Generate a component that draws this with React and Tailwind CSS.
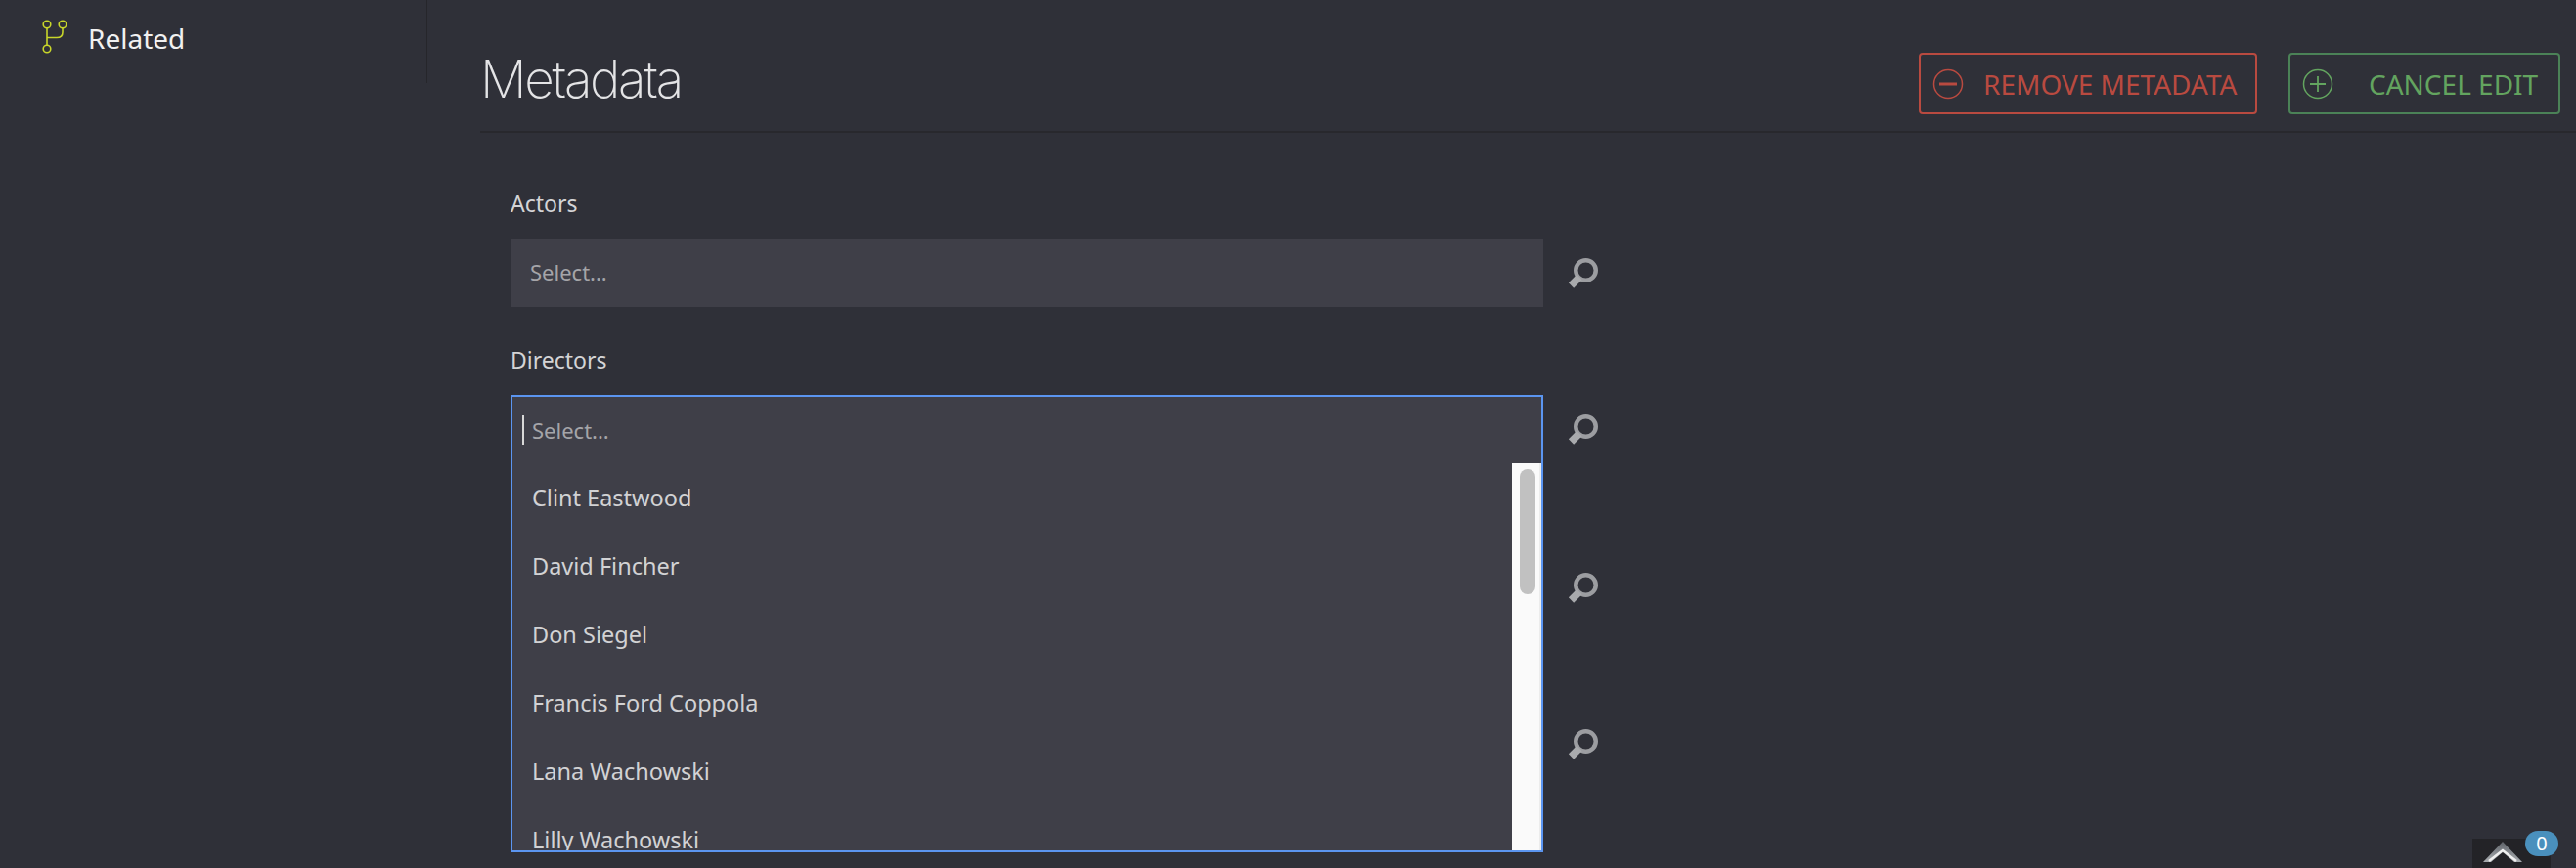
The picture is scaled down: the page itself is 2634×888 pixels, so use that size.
import { useState } from "react";

const SANS = "font-['Noto_Sans',sans-serif]";

const directors = [
    "Clint Eastwood",
    "David Fincher",
    "Don Siegel",
    "Francis Ford Coppola",
    "Lana Wachowski",
    "Lilly Wachowski",
];

function BranchIcon() {
    return (
        <svg width="30" height="38" viewBox="0 0 30 38" fill="none" stroke="#c8d62a" strokeWidth="1.6" className="shrink-0">
            <circle cx="8" cy="7" r="3.800" />
            <circle cx="24" cy="7" r="3.800" />
            <circle cx="8" cy="32" r="3.800" />
            <path d="M8 10.800v17.400M8 20.500h10c3.500 0 6-2 6-5.500v-4.200" />
        </svg>
    );
}

function SearchIcon() {
    return (
        <svg width="34" height="34" viewBox="0 0 34 34" fill="none" className="shrink-0">
            <circle cx="20.500" cy="13.500" r="10.250" stroke="#9c9da1" strokeWidth="4.500" />
            <path d="M14 20.500 5.500 29" stroke="#a9aaad" strokeWidth="7.500" />
        </svg>
    );
}

function ActionButton({ label, tone, icon, gap, width }) {
    const isRed = tone === "red";
    return (
        <button
            className={`flex items-center h-[63px] rounded-[4px] border-2 pl-[12px] ${width} ${isRed ? "border-[#b94a40] text-[#b94a40]" : "border-[#4b8257] text-[#63a45f]"}`}
        >
            <svg width="32" height="32" viewBox="0 0 32 32" fill="none" stroke="currentColor" className="shrink-0">
                <circle cx="16" cy="16" r="14.500" strokeWidth="1.500" />
                {icon === "minus" ? (
                    <path d="M7 16h18" strokeWidth="3" />
                ) : (
                    <path d="M8 16h16M16 8v16" strokeWidth="1.800" />
                )}
            </svg>
            <span className={`text-[28px] leading-none whitespace-nowrap ${gap}`}>{label}</span>
        </button>
    );
}

// covered rows sit behind the open dropdown, only their search icon shows
function SelectField({ label, height, covered }) {
    return (
        <div className={`${height} pt-[32px]`}>
            <div className="text-[23px] leading-[30px] pt-[2px] h-[30px] text-[#d4d4d6] mb-[23px]">{label}</div>
            <div className="flex items-center">
                <div className="w-[1056px] h-[70px] bg-[#3f3f48] flex items-center pl-[20px] pb-[2px] text-[22px] text-[#a5a5a9]">
                    {!covered && "Select..."}
                </div>
                <div className="ml-[23px] mt-[2px]">
                    <SearchIcon />
                </div>
            </div>
        </div>
    );
}

function DirectorsMenu() {
    return (
        <div className="absolute left-[31px] top-[404px] w-[1056px] h-[468px] border-2 border-[#5b95f0] bg-[#3f3f48] flex flex-col">
            <div className="h-[68px] shrink-0 flex items-center pl-[10px] text-[22px] text-[#a5a5a9]">
                <span className="w-[2px] h-[30px] bg-[#d8d8d8] mr-[8px]" />
                Select...
            </div>
            <div className="flex-1 flex min-h-0">
                <div className="flex-1 overflow-hidden">
                    {directors.map((name) => (
                        <div key={name} className="h-[70px] pt-[2px] flex items-center pl-[20px] text-[23.500px] text-[#d2d2d4]">
                            {name}
                        </div>
                    ))}
                </div>
                <div className="w-[30px] bg-[#fafafa] border-r-2 border-[#ececec] pt-[6px] pl-[8px]">
                    <div className="w-[16px] h-[128px] rounded-full bg-[#c1c1c1]" />
                </div>
            </div>
        </div>
    );
}

export default function App() {
    const [count] = useState(0);

    return (
        <div className={`relative h-[888px] overflow-hidden flex bg-[#2f3038] ${SANS}`}>
            <aside className="w-[491px] shrink-0">
                <div className="w-[437px] h-[85px] border-r border-[#26262b] flex items-start pl-[40px] pt-[18px] gap-[20px]">
                    <BranchIcon />
                    <span className="text-[28px] leading-[38px] pt-[2px] text-[#f1f1f1]">Related</span>
                </div>
            </aside>
            <main className="relative flex-1">
                <header className="h-[136px] border-b-2 border-[#28282d] flex items-start justify-between pr-[16px]">
                    <h1 className="mt-[46px] font-['Inter',sans-serif] font-extralight text-[53px] leading-[70px] tracking-[-2.300px] text-[#e4e4e6]">
                        Metadata
                    </h1>
                    <div className="flex gap-[32px] mt-[54px]">
                        <ActionButton label="REMOVE METADATA" tone="red" icon="minus" gap="ml-[20px]" width="w-[346px]" />
                        <ActionButton label="CANCEL EDIT" tone="green" icon="plus" gap="ml-[36px]" width="w-[278px]" />
                    </div>
                </header>
                <div className="pl-[31px] pt-[23px]">
                    <SelectField label="Actors" height="h-[160px]" />
                    <SelectField label="Directors" height="h-[162px]" covered />
                    <SelectField height="h-[160px]" covered />
                    <SelectField height="h-[160px]" covered />
                </div>
                <DirectorsMenu />
            </main>
            <div className="absolute right-[26px] bottom-0 w-[80px] h-[30px] bg-[#232327]">
                <svg width="40" height="22" viewBox="0 0 40 22" className="absolute left-[11px] top-[2px]">
                    <defs>
                        <linearGradient id="chevron" x1="0" y1="0" x2="0" y2="1">
                            <stop offset="0" stopColor="#5e6268" />
                            <stop offset="1" stopColor="#a9adb1" />
                        </linearGradient>
                    </defs>
                    <path d="M0 22 20 1 40 22H32L20 12 8 22Z" fill="url(#chevron)" />
                    <path d="M6 21 20 10 34 21" fill="none" stroke="#f0f0f0" strokeWidth="2.500" />
                </svg>
            </div>
            <div className="absolute right-[18px] bottom-[12px] w-[34px] h-[26px] rounded-full bg-[#4a90bd] text-white text-[20px] leading-[26px] text-center">
                {count}
            </div>
        </div>
    );
}
